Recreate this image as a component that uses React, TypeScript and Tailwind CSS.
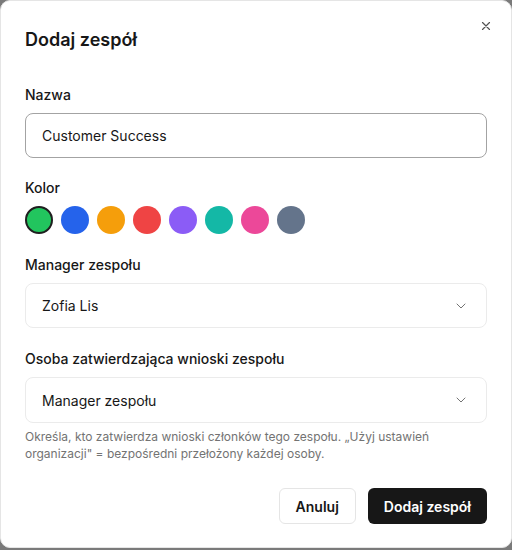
import React from "react";

const colors = ["#22c55e", "#2563eb", "#f59e0b", "#ef4444", "#8b5cf6", "#14b8a6", "#ec4899", "#64748b"];

function Chevron() {
  return (
    <svg width="16" height="16" viewBox="0 0 24 24" fill="none" stroke="#737373" strokeWidth="1.5" strokeLinecap="round" strokeLinejoin="round">
      <path d="m6 9 6 6 6-6" />
    </svg>
  );
}

export default function App() {
  return (
    <div className="h-[550px] w-[512px] bg-[#7a7a7a]" style={{ fontFamily: "Inter, 'Noto Sans', sans-serif" }}>
      <div className="relative flex h-[548px] w-[512px] flex-col rounded-[10px] border border-[#e5e5e5] bg-white px-[24px] pt-[27px] text-[#171717]">
        <button className="absolute right-[18px] top-[18px] text-[#525252]">
          <svg width="14" height="14" viewBox="0 0 24 24" fill="none" stroke="currentColor" strokeWidth="2" strokeLinecap="round">
            <path d="M18 6 6 18M6 6l12 12" />
          </svg>
        </button>
        <h2 className="text-[18px] font-semibold leading-[24px]">Dodaj zespół</h2>

        <div className="mt-[33px] text-[14px] font-medium leading-[20px]">Nazwa</div>
        <div className="mt-[8px] flex h-[45px] items-center rounded-[8px] border border-[#a3a3a3] px-[16px] text-[14px]">
          Customer Success
        </div>

        <div className="mt-[20px] text-[14px] font-medium leading-[20px]">Kolor</div>
        <div className="mt-[8px] flex gap-[8px]">
          {colors.map((c, i) => (
            <div
              key={c}
              className={i === 0 ? "h-[28px] w-[28px] rounded-full border-[2px] border-[#1f1f1f]" : "h-[28px] w-[28px] rounded-full"}
              style={{ backgroundColor: c }}
            />
          ))}
        </div>

        <div className="mt-[21px] text-[14px] font-medium leading-[20px]">Manager zespołu</div>
        <div className="mt-[8px] flex h-[45px] items-center justify-between rounded-[8px] border border-[#ebebeb] pl-[16px] pr-[17px] text-[14px]">
          <span>Zofia Lis</span>
          <Chevron />
        </div>

        <div className="mt-[21px] text-[14px] font-medium leading-[20px]">Osoba zatwierdzająca wnioski zespołu</div>
        <div className="mt-[8px] flex h-[46px] items-center justify-between rounded-[8px] border border-[#ebebeb] pl-[16px] pr-[17px] text-[14px]">
          <span>Manager zespołu</span>
          <Chevron />
        </div>
        <p className="mt-[5px] text-[12px] leading-[17px] text-[#737373]">
          Określa, kto zatwierdza wnioski członków tego zespołu. „Użyj ustawień organizacji" = bezpośredni przełożony każdej osoby.
        </p>

        <div className="mt-[26px] flex justify-end gap-[12px]">
          <button className="h-[36px] rounded-[6px] border border-[#e5e5e5] bg-white px-[16px] text-[14px] font-semibold">Anuluj</button>
          <button className="h-[36px] rounded-[6px] bg-[#171717] px-[16px] text-[14px] font-semibold text-white">Dodaj zespół</button>
        </div>
      </div>
    </div>
  );
}
